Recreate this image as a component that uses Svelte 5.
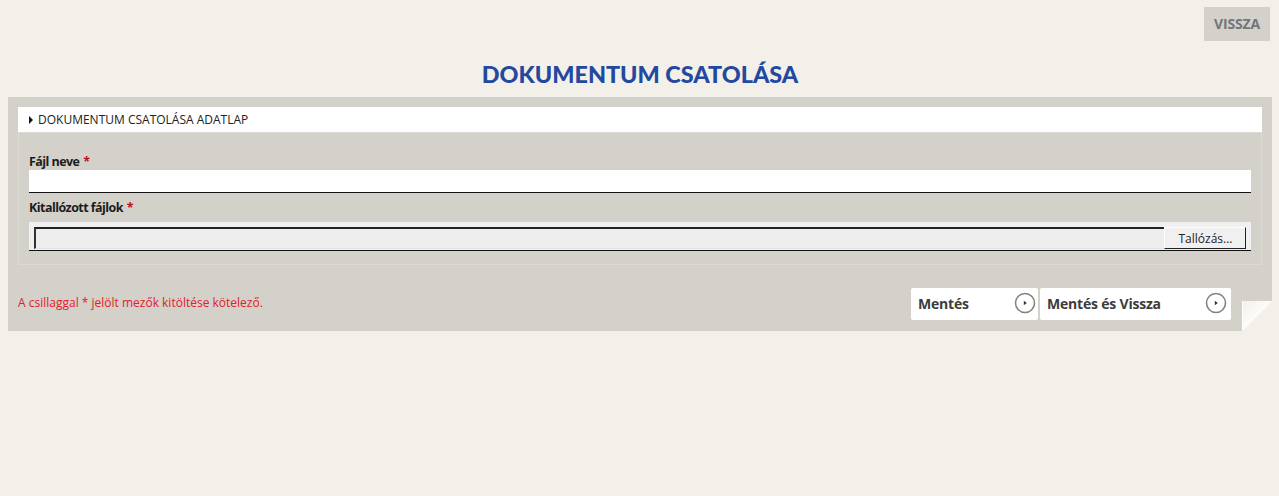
<script>
  const buttons = [
    { label: "Mentés", width: 127, cls: "" },
    { label: "Mentés és Vissza", width: 191, cls: "wide" },
  ];
</script>

<div class="page">
  <div class="topbar">
    <a class="back" href="#top">VISSZA</a>
  </div>
  <h1>DOKUMENTUM CSATOLÁSA</h1>

  <div class="panel">
    <div class="section-head"><span class="arrow"></span>DOKUMENTUM CSATOLÁSA ADATLAP</div>
    <div class="fields">
      <label for="name">Fájl neve <em>*</em></label>
      <input id="name" type="text" />
      <label for="file" class="second">Kitallózott fájlok <em>*</em></label>
      <div class="filebox">
        <div class="filepath" id="file"></div>
        <button type="button">Tallózás...</button>
      </div>
    </div>

    <div class="footer">
      <p>A csillaggal * jelölt mezők kitöltése kötelező.</p>
      <div class="actions">
        {#each buttons as b}
          <button type="button" class="action {b.cls}" style="width: {b.width}px">
            <span>{b.label}</span>
            <svg width="22" height="22" viewBox="0 0 22 22" aria-hidden="true">
              <circle cx="11" cy="11" r="9.5" fill="#fff" stroke="#85857f" stroke-width="1.6" />
              <path d="M9.8 8.8 L12.8 11 L9.8 13.2 Z" fill="#333" />
            </svg>
          </button>
        {/each}
      </div>
    </div>
    <div class="fold"></div>
  </div>
</div>

<style>
  :global(body) {
    background: #f3f0e9;
    font-family: "Open Sans", sans-serif;
  }
  .page {
    height: 496px;
    padding: 7px 7px 0 8px;
    box-sizing: border-box;
  }
  .topbar {
    display: flex;
    justify-content: flex-end;
    padding-right: 2px;
  }
  .back {
    width: 66px;
    height: 34px;
    background: #d3d1c9;
    color: #70767a;
    font: 700 14px/34px "Open Sans", sans-serif;
    letter-spacing: -0.15px;
    text-align: center;
    text-decoration: none;
  }
  h1 {
    margin: 19px 0 0;
    height: 37px;
    text-align: center;
    color: #2348a0;
    font: 900 23.4px/28px Lato, sans-serif;
  }
  .panel {
    position: relative;
    height: 234px;
    background: #d3d1c9;
    padding: 10px 10px 0;
    box-sizing: border-box;
  }
  .section-head {
    height: 25px;
    background: #fff;
    display: flex;
    align-items: center;
    padding-left: 11px;
    gap: 5px;
    font-size: 12px;
    color: #222;
  }
  .arrow {
    width: 0;
    height: 0;
    border-left: 4px solid #111;
    border-top: 4px solid transparent;
    border-bottom: 4px solid transparent;
  }
  .fields {
    height: 133px;
    box-sizing: border-box;
    border: 1px solid #dcdad3;
    padding: 20px 10px 0;
    display: flex;
    flex-direction: column;
  }
  label {
    font-size: 12.5px;
    font-weight: 700;
    line-height: 17px;
    letter-spacing: -0.55px;
    color: #1c1c1c;
  }
  label em {
    font-style: normal;
    margin-left: 1px;
    color: #b8121f;
  }
  input {
    height: 23px;
    box-sizing: border-box;
    border: 0;
    border-bottom: 1px solid #111;
    background: #fff;
    padding: 0;
    outline: none;
  }
  .second {
    margin-top: 6px;
    margin-bottom: 6px;
  }
  .filebox {
    height: 29px;
    box-sizing: border-box;
    background: #f0f0f0;
    border-bottom: 1px solid #111;
    display: flex;
    align-items: stretch;
    padding: 5px 5px 1px 5px;
  }
  .filepath {
    flex: 1;
    box-sizing: border-box;
    border-top: 2px solid #222;
    border-left: 2px solid #333;
    border-bottom: 1px solid #e4e4e4;
    background: #eeeeef;
  }
  .filebox button {
    width: 82px;
    border: 0;
    border-top: 1px solid #fff;
    border-left: 1px solid #fff;
    border-right: 1px solid #222;
    border-bottom: 1px solid #222;
    background: #f0f0f0;
    font: 12px "Open Sans", sans-serif;
    color: #222;
    padding: 0 0 0 1px;
  }
  .footer {
    display: flex;
    justify-content: space-between;
    align-items: flex-start;
    padding: 23px 31px 0 0;
  }
  p {
    margin: 6px 0 0;
    font-size: 12px;
    line-height: 17px;
    color: #e2202a;
  }
  .actions {
    display: flex;
    gap: 2px;
  }
  .action {
    height: 32px;
    display: flex;
    align-items: center;
    justify-content: space-between;
    box-sizing: border-box;
    border: 0;
    border-radius: 2px;
    background: #fff;
    padding: 0 2px 2px 7px;
    font: 700 14px "Open Sans", sans-serif;
    letter-spacing: -0.2px;
    color: #3c3c3c;
  }
  .wide {
    padding-right: 4px;
  }
  .fold {
    position: absolute;
    right: 0;
    bottom: 0;
    width: 30px;
    height: 30px;
    background: linear-gradient(to bottom right, #f3f0e9 0, #fdfcfa 49.5%, #f3f0e9 50%);
    border-left: 1px solid #fff;
    box-sizing: border-box;
  }
</style>
